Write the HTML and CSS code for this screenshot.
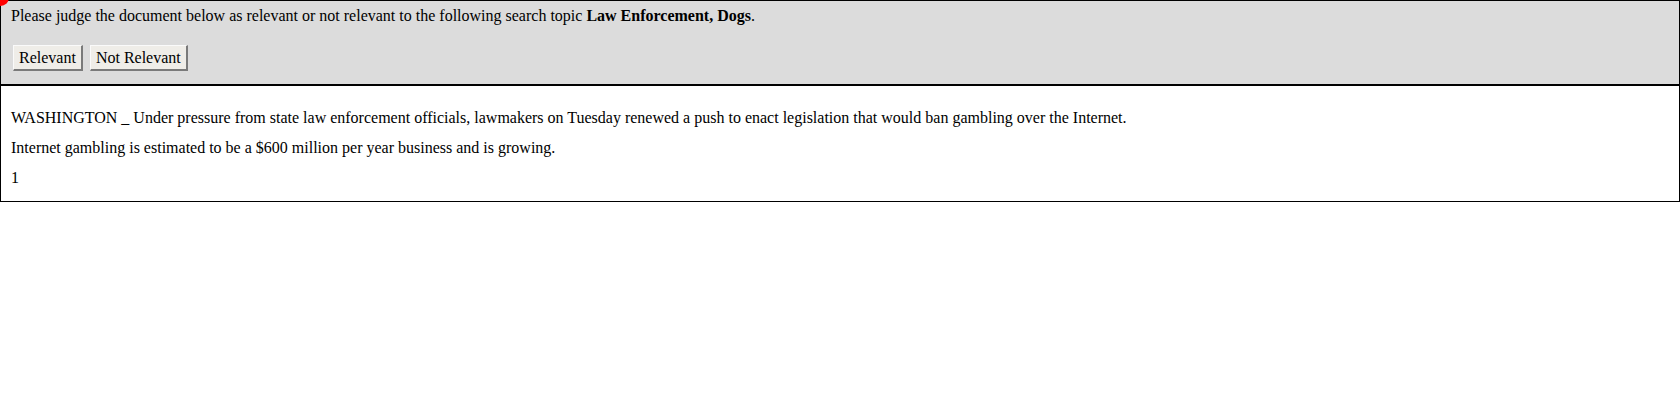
FILE: index.html
```html
<!DOCTYPE html>
<html>
<head>
<meta charset="utf-8">
<link rel="stylesheet" href="styles.css">
</head>
<body>
<div class="marker"></div>
<div class="judge">
  <div class="prompt">Please judge the document below as relevant or not relevant to the following search topic <b>Law Enforcement, Dogs</b>.</div>
  <div class="actions">
    <button class="btn" type="button">Relevant</button>
    <button class="btn" type="button">Not Relevant</button>
  </div>
</div>
<div class="doc">
  <p class="para">WASHINGTON _ Under pressure from state law enforcement officials, lawmakers on Tuesday renewed a push to enact legislation that would ban gambling over the Internet.</p>
  <p class="para">Internet gambling is estimated to be a $600 million per year business and is growing.</p>
  <p class="para">1</p>
</div>
</body>
</html>
```
FILE: styles.css
```css
body {
  margin: 0;
  font-family: "Liberation Serif", "Times New Roman", serif;
  font-size: 16px;
  color: #000;
  background: #fff;
}
.marker {
  position: absolute;
  left: -8px;
  top: -11px;
  width: 17px;
  height: 17px;
  border-radius: 50%;
  background: #ff0000;
}
.judge {
  background: #dcdcdc;
  border: 1px solid #000;
  padding: 5px 10px 13px;
}
.prompt {
  line-height: 19px;
}
.actions {
  margin-top: 20px;
  display: flex;
  gap: 7px;
  padding-left: 2px;
}
.btn {
  font-family: "Liberation Serif", "Times New Roman", serif;
  font-size: 16px;
  color: #000;
  background: #efede8;
  border: 1px solid #fafafa;
  border-right: 2px solid #7a7a7a;
  border-bottom: 2px solid #7a7a7a;
  padding: 2px 5px;
  height: 26px;
  line-height: 18px;
}
.doc {
  border: 1px solid #000;
  padding: 11px 10px 14px;
}
.para {
  margin: 11px 0 0;
  line-height: 19px;
}
```
